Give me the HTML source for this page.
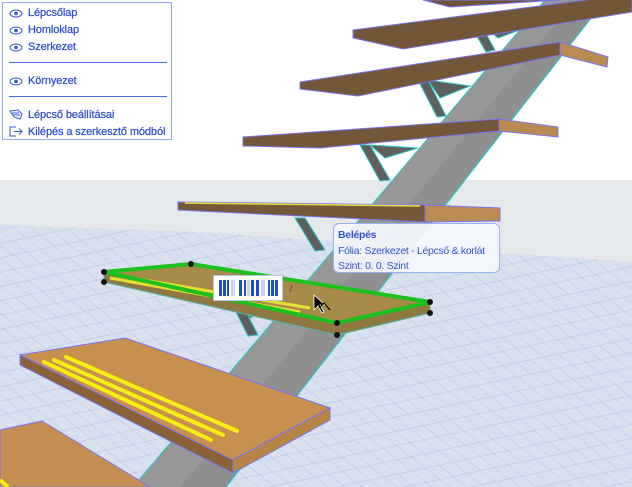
<!DOCTYPE html>
<html><head><meta charset="utf-8"><style>
html,body{margin:0;padding:0;width:632px;height:487px;overflow:hidden;background:#fff;font-family:"Liberation Sans",sans-serif}
#menu{position:absolute;left:2px;top:2px;width:170px;height:138px;border:1px solid #8ea9f0;background:#fff;box-sizing:border-box}
.it{position:absolute;left:6px;font-size:11px;color:#2f4fcc;white-space:nowrap;line-height:12px;letter-spacing:-0.1px;-webkit-text-stroke:0.25px #2f4fcc}
.sep{position:absolute;left:6px;right:4px;height:1px;background:#4a6be0}
.ic{display:inline-block;width:14px;margin-right:5px;vertical-align:-2px}
#tip{position:absolute;left:333px;top:223px;width:167px;height:50px;border:1px solid #9ab2ee;border-radius:6px;background:rgba(244,247,252,.93);box-sizing:border-box;font-size:10.5px;color:#3554d0;padding:4px 0 0 4px;line-height:15.5px;white-space:nowrap;letter-spacing:-0.3px}
#tb{position:absolute;left:213px;top:275px;width:70px;height:26px;background:#fff;border:1px solid #b5c4e8;box-sizing:border-box}
</style></head><body>
<svg width="632" height="487" style="position:absolute;left:0;top:0">
<defs>
<pattern id="g" width="14" height="14" patternUnits="userSpaceOnUse" patternTransform="rotate(-12) skewX(40)">
<rect width="14" height="14" fill="#d9e1ee"/>
<path d="M0 0H14M0 0V14" stroke="#b3c3e6" stroke-width="1"/>
</pattern>
</defs>
<rect x="0" y="180" width="632" height="307" fill="#e5e9ec"/>
<polygon points="0,225 200,232 632,262 632,487 0,487" fill="url(#g)"/>
<polygon points="545,0 605,0 226,487 133,487" fill="#8f8f8f"/>
<polygon points="545,0 575,0 180,487 133,487" fill="#979797"/>
<line x1="605" y1="0" x2="226" y2="487" stroke="#2cc6c6" stroke-width="1.2"/>
<line x1="545" y1="0" x2="133" y2="487" stroke="#2cc6c6" stroke-width="1"/>
<g fill="#5f5f5f" stroke="#2ec4c4" stroke-width="1">
<polygon points="470,24 480,23 495,50 486,52"/><polygon points="480,23 522,29 498,38"/>
<polygon points="418,80 428,80 446,116 437,117"/><polygon points="428,80 470,86 440,98"/>
<polygon points="360,145 370,145 390,180 380,181"/><polygon points="370,145 418,148 385,158"/>
<polygon points="295,218 305,218 325,250 315,251"/>
<polygon points="230,300 240,300 258,335 248,336"/><polygon points="240,305 272,307 250,318"/>
</g>
<g stroke="#7b72ee" stroke-width="1">
<polygon points="423,0 560,0 450,7" fill="#6f5434"/>
<polygon points="353,30 632,-6 632,12 403,49 353,38" fill="#725637"/>
<polygon points="300,82 560,42 560,55 358,96 300,89" fill="#735738"/>
<polygon points="560,42 608,57 607,67 560,55" fill="#b98a52"/>
<polygon points="243,137 499,119 499,131 320,148 243,146" fill="#735738"/>
<polygon points="499,119 558,127 558,137 499,131" fill="#b98a52"/>
<polygon points="178,202 425,205 425,222 178,210" fill="#745838"/>
<polygon points="425,205 500,208 500,221 425,222" fill="#bb8c54"/>
<line x1="185" y1="203" x2="420" y2="206" stroke="#e8e23c" stroke-width="1.5"/>
</g>
<polygon points="20,355 125,338 330,408 233,460" fill="#c7904f" stroke="#7b72ee"/>
<polygon points="20,355 233,460 233,473 20,365" fill="#8a6236" stroke="#7b72ee"/>
<polygon points="233,460 330,408 330,420 233,473" fill="#b88548" stroke="#7b72ee"/>
<g stroke="#f5ee10" stroke-width="4" stroke-linecap="round">
<line x1="44" y1="362" x2="211" y2="440"/><line x1="54" y1="360" x2="223" y2="435"/><line x1="66" y1="357" x2="237" y2="431"/>
</g>
<polygon points="0,430 42,421 150,487 0,487" fill="#c48e50" stroke="#7b72ee"/>
<line x1="0" y1="480" x2="8" y2="487" stroke="#f5ee10" stroke-width="4"/>
<polygon points="104,282 337,335 430,313 430,302 337,323 104,272" fill="#8f7840" stroke="#5ab0a0"/>
<polygon points="104,272 191,264 430,302 337,323" fill="#a68c48"/>
<g stroke="#e6e030" stroke-width="3"><line x1="110" y1="278" x2="300" y2="312"/><line x1="120" y1="276" x2="310" y2="308"/></g>
<polygon points="104,272 191,264 430,302 337,323" fill="none" stroke="#1ec01e" stroke-width="4"/>
<polyline points="104,282 337,335 430,313" fill="none" stroke="#5ab0a0" stroke-width="1"/>
<g fill="#111"><circle cx="104" cy="272" r="3"/><circle cx="104" cy="282" r="3"/><circle cx="191" cy="264" r="3"/><circle cx="430" cy="302" r="3"/><circle cx="430" cy="313" r="3"/><circle cx="337" cy="323" r="3"/><circle cx="337" cy="335" r="3"/></g>
<line x1="290" y1="292" x2="292" y2="285" stroke="#555" stroke-width="1"/>
<polygon points="314,295 314,310 318,306 322,313 324,312 320,305 325,305" fill="#000" stroke="#fff" stroke-width="0.8"/>
<path d="M319 308 L324 303 L330 310" fill="none" stroke="#000" stroke-width="1.2"/>
</svg>
<div id="tb"><svg width="68" height="24"><g fill="#1f4fd0">
<rect x="5" y="4" width="3" height="16"/><rect x="9" y="4" width="3" height="16"/><rect x="13" y="4" width="2" height="16"/>
<rect x="25" y="4" width="3" height="16"/><rect x="30" y="4" width="2" height="16"/><rect x="37" y="4" width="3" height="16"/><rect x="42" y="4" width="3" height="16"/>
<rect x="54" y="4" width="2" height="16"/><rect x="57" y="4" width="3" height="16"/><rect x="61" y="4" width="3" height="16"/></g>
<g fill="#c8d6f2"><rect x="17" y="4" width="4" height="16"/><rect x="33" y="4" width="3" height="16"/><rect x="47" y="4" width="4" height="16"/></g></svg></div>
<div id="menu">
<div class="it" style="top:4px"><svg class="ic" width="14" height="9"><ellipse cx="7" cy="4.5" rx="6" ry="3.5" fill="none" stroke="#3554d0"/><circle cx="7" cy="4.5" r="1.8" fill="#3554d0"/></svg>Lépcsőlap</div>
<div class="it" style="top:21px"><svg class="ic" width="14" height="9"><ellipse cx="7" cy="4.5" rx="6" ry="3.5" fill="none" stroke="#3554d0"/><circle cx="7" cy="4.5" r="1.8" fill="#3554d0"/></svg>Homloklap</div>
<div class="it" style="top:38px"><svg class="ic" width="14" height="9"><ellipse cx="7" cy="4.5" rx="6" ry="3.5" fill="none" stroke="#3554d0"/><circle cx="7" cy="4.5" r="1.8" fill="#3554d0"/></svg>Szerkezet</div>
<div class="sep" style="top:59px"></div>
<div class="it" style="top:72px"><svg class="ic" width="14" height="9"><ellipse cx="7" cy="4.5" rx="6" ry="3.5" fill="none" stroke="#3554d0"/><circle cx="7" cy="4.5" r="1.8" fill="#3554d0"/></svg>Környezet</div>
<div class="sep" style="top:93px"></div>
<div class="it" style="top:106px"><svg class="ic" width="14" height="11"><path d="M1 2 L9 1 L13 5 L11 10 L5 8 Z M3 4 L10 4 M4 6 L11 6" fill="none" stroke="#3554d0"/></svg>Lépcső beállításai</div>
<div class="it" style="top:123px"><svg class="ic" width="14" height="11"><path d="M7 1 H1 V10 H7 M5 5.5 H13 M10 2.5 L13 5.5 L10 8.5" fill="none" stroke="#3554d0"/></svg>Kilépés a szerkesztő módból</div>
</div>
<div id="tip"><b>Belépés</b><br>Fólia: Szerkezet - Lépcső &amp; korlát<br>Szint: 0. 0. Szint</div>
</body></html>
